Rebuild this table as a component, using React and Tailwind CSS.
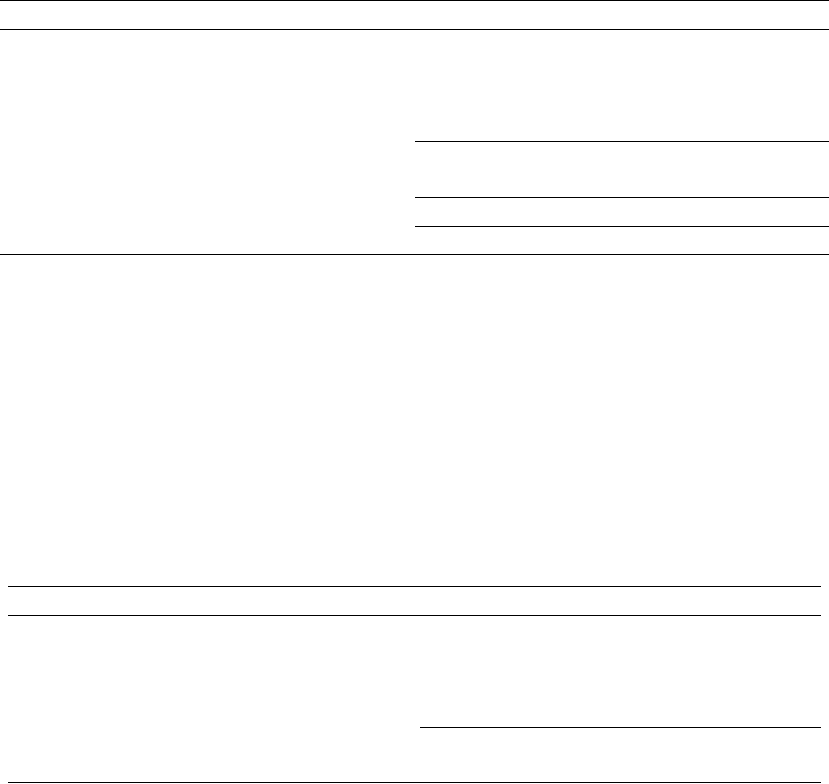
export default function App() {
  return (
    <div className="w-[829px] h-[784px] bg-white overflow-hidden" style={{ fontFamily: '"Liberation Sans", Arial, sans-serif' }}>
      <section className="border-t border-b border-black">
        <div className="h-[29px] border-b border-black"></div>
        <div className="flex h-[224px]">
          <div className="w-[415px]"></div>
          <div className="flex-1 flex flex-col">
            <div className="h-[112px] border-b border-black"></div>
            <div className="h-[56px] border-b border-black"></div>
            <div className="h-[29px] border-b border-black"></div>
            <div className="flex-1"></div>
          </div>
        </div>
      </section>
      <div className="h-[331px]"></div>
      <section className="mx-2 border-t border-b border-black">
        <div className="h-[29px] border-b border-black"></div>
        <div className="flex h-[166px]">
          <div className="w-[412px]"></div>
          <div className="flex-1 flex flex-col">
            <div className="h-[112px] border-b border-black"></div>
            <div className="flex-1"></div>
          </div>
        </div>
      </section>
    </div>
  );
}
